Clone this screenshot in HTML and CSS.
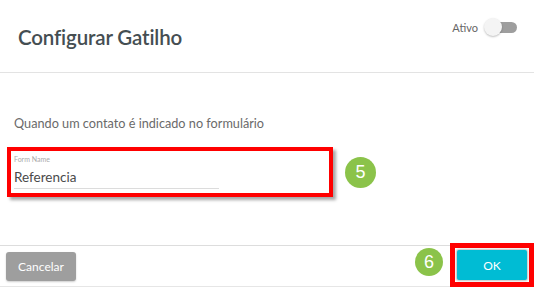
FILE: index.html
```html
<!DOCTYPE html>
<html lang="pt">
<head>
<meta charset="utf-8">
<title>Configurar Gatilho</title>
<link rel="stylesheet" href="styles.css">
</head>
<body>
<div class="modal">
  <header class="modal-header">
    <h1 class="title">Configurar Gatilho</h1>
    <div class="active-toggle">
      <span class="active-label">Ativo</span>
      <span class="switch"><span class="switch-track"></span><span class="switch-knob"></span></span>
    </div>
  </header>
  <main class="modal-body">
    <p class="description">Quando um contato é indicado no formulário</p>
    <div class="field-row">
      <div class="highlight field-highlight">
        <div class="field">
          <label class="field-label">Form Name</label>
          <div class="field-value">Referencia</div>
        </div>
      </div>
      <span class="step step-5">5</span>
    </div>
  </main>
  <footer class="modal-footer">
    <button class="btn btn-cancel">Cancelar</button>
    <div class="footer-right">
      <span class="step step-6">6</span>
      <div class="highlight ok-highlight">
        <button class="btn btn-ok">OK</button>
      </div>
    </div>
  </footer>
</div>
</body>
</html>
```

FILE: styles.css
```css
* { box-sizing: border-box; }
html, body { margin: 0; padding: 0; background: #fff; }
body { font-family: Lato, "Open Sans", "Liberation Sans", sans-serif; }

.modal {
  width: 534px;
  height: 287px;
  display: flex;
  flex-direction: column;
  overflow: hidden;
}

.modal-header {
  height: 73px;
  border-bottom: 1px solid #e3e3e3;
  display: flex;
  justify-content: space-between;
  align-items: flex-start;
  padding: 0 17px 0 17px;
  flex: none;
}
.title {
  margin: 26px 0 0 1px;
  font-size: 20.5px;
  line-height: 22px;
  font-weight: 600;
  color: #454e52;
  letter-spacing: -0.15px;
}
.active-toggle {
  margin-top: 18px;
  display: flex;
  align-items: center;
  gap: 6px;
}
.active-label {
  font-size: 11px;
  line-height: 13px;
  color: #666;
}
.switch {
  position: relative;
  width: 33px;
  height: 18px;
  display: flex;
  align-items: center;
}
.switch-track {
  margin-left: 6px;
  width: 27px;
  height: 11px;
  border-radius: 6px;
  background: #9e9e9e;
}
.switch-knob {
  position: absolute;
  left: 0;
  top: 0;
  width: 18px;
  height: 18px;
  border-radius: 50%;
  background: #f4f4f4;
  box-shadow: 0 1px 2px rgba(0,0,0,0.25);
}

.modal-body {
  flex: 1;
  padding: 42px 0 0 7px;
}
.description {
  margin: 0 0 16px 7px;
  font-size: 12.7px;
  line-height: 16px;
  color: #6a6a6a;
}
.field-row {
  display: flex;
  align-items: center;
  gap: 12px;
}
.highlight {
  border: 4px solid #ff0000;
  box-shadow: 3px 3px 3px rgba(0,0,0,0.35);
}
.field-highlight {
  width: 326px;
  height: 50px;
  padding: 4px 0 0 3px;
}
.field {
  width: 205px;
  border-bottom: 1px solid #dcdcdc;
  padding-bottom: 2px;
}
.field-label {
  display: block;
  font-size: 7px;
  line-height: 8px;
  color: #aaa;
  margin-bottom: 6px;
}
.field-value {
  font-size: 13.5px;
  line-height: 17px;
  color: #4a4a4a;
}
.step {
  width: 31px;
  height: 31px;
  border-radius: 50%;
  background: #8bc34a;
  color: #fff;
  font-family: "Liberation Sans", Arial, sans-serif;
  font-size: 18px;
  display: flex;
  align-items: center;
  justify-content: center;
  flex: none;
}
.step-6 {
  width: 28px;
  height: 28px;
  align-self: flex-start;
  margin-top: 2px;
}

.modal-footer {
  flex: none;
  height: 42px;
  border-top: 1px solid #ddd;
  border-bottom: 1px solid #e6e6e6;
  display: flex;
  justify-content: space-between;
  align-items: center;
  padding: 0 0 0 6px;
}
.btn {
  border: 0;
  font-family: Lato, "Open Sans", "Liberation Sans", sans-serif;
  font-size: 12px;
  color: #fff;
  border-radius: 3px;
  cursor: pointer;
}
.btn-cancel {
  width: 70px;
  height: 29px;
  background: #9e9e9e;
  box-shadow: 0 1px 2px rgba(0,0,0,0.2);
}
.footer-right {
  display: flex;
  align-self: stretch;
  gap: 7px;
}
.ok-highlight {
  width: 84px;
  margin: -3px 0 -1px 0;
  border-width: 5px;
  padding: 2px;
  display: flex;
  box-shadow: none;
}
.btn-ok {
  flex: 1;
  background: #00bcd4;
  border-radius: 2px;
  box-shadow: 0 0 2px 1px rgba(0,0,0,0.25);
}
```
